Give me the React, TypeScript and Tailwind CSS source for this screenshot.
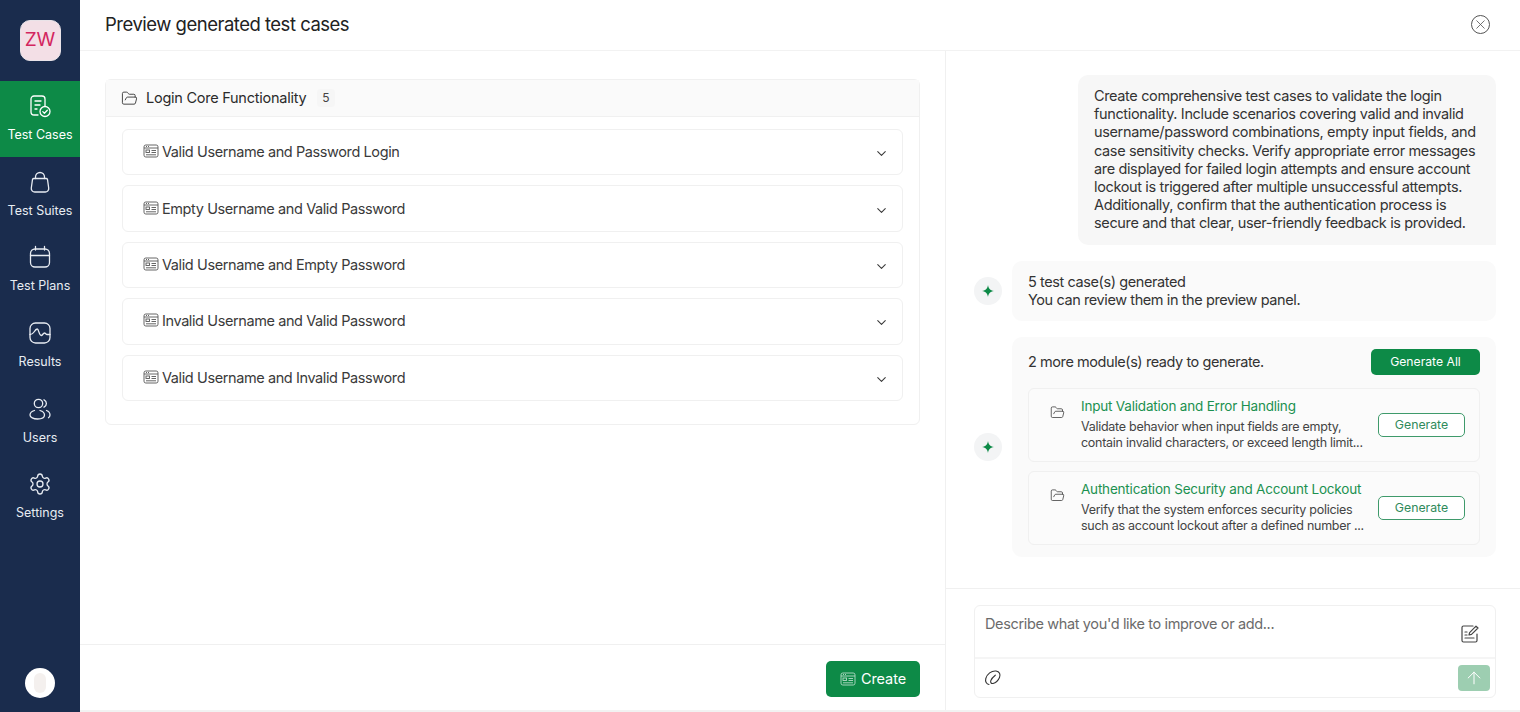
import { ArrowUp, ChevronDown, FolderOpen, Settings, X } from "lucide-react";

const NAV_ITEMS = [
  { label: "Test Cases", icon: CasesIcon, active: true },
  { label: "Test Suites", icon: BagIcon },
  { label: "Test Plans", icon: CalendarIcon },
  { label: "Results", icon: PulseIcon },
  { label: "Users", icon: UsersIcon },
  { label: "Settings", icon: GearIcon },
];

const TEST_CASES = [
  "Valid Username and Password Login",
  "Empty Username and Valid Password",
  "Valid Username and Empty Password",
  "Invalid Username and Valid Password",
  "Valid Username and Invalid Password",
];

const PROMPT_LINES = [
  "Create comprehensive test cases to validate the login",
  "functionality. Include scenarios covering valid and invalid",
  "username/password combinations, empty input fields, and",
  "case sensitivity checks. Verify appropriate error messages",
  "are displayed for failed login attempts and ensure account",
  "lockout is triggered after multiple unsuccessful attempts.",
  "Additionally, confirm that the authentication process is",
  "secure and that clear, user-friendly feedback is provided.",
];

const MODULES = [
  {
    title: "Input Validation and Error Handling",
    lines: [
      "Validate behavior when input fields are empty,",
      "contain invalid characters, or exceed length limit...",
    ],
  },
  {
    title: "Authentication Security and Account Lockout",
    lines: [
      "Verify that the system enforces security policies",
      "such as account lockout after a defined number ...",
    ],
  },
];

function CasesIcon() {
  return (
    <svg width="24" height="24" viewBox="0 0 24 24" fill="none" stroke="currentColor" strokeWidth="1.3" strokeLinecap="round" strokeLinejoin="round">
      <path d="M10 21H6a3 3 0 0 1-3-3V5a3 3 0 0 1 3-3h8a3 3 0 0 1 3 3v7" />
      <path d="M7 7h6M7 11h5M7 15h2" />
      <circle cx="17" cy="17.5" r="5" />
      <path d="m14.8 17.6 1.6 1.6 2.9-3" />
    </svg>
  );
}

function BagIcon() {
  return (
    <svg width="24" height="24" viewBox="0 0 24 24" fill="none" stroke="currentColor" strokeWidth="1.3" strokeLinecap="round" strokeLinejoin="round">
      <path d="M7.5 8.5V7a4.5 4.5 0 0 1 9 0v1.5" />
      <path d="M5.8 8.5h12.4c.6 0 1.1.4 1.3 1l1.2 8.5a3.5 3.5 0 0 1-3.5 4H6.8a3.5 3.5 0 0 1-3.5-4l1.2-8.5c.2-.6.7-1 1.3-1Z" />
    </svg>
  );
}

function CalendarIcon() {
  return (
    <svg width="24" height="24" viewBox="0 0 24 24" fill="none" stroke="currentColor" strokeWidth="1.3" strokeLinecap="round" strokeLinejoin="round">
      <rect x="2.5" y="4" width="19" height="18" rx="4.5" />
      <path d="M2.5 10.5h19M7.5 1.500V5M16.5 1.500V5" />
    </svg>
  );
}

function PulseIcon() {
  return (
    <svg width="24" height="24" viewBox="0 0 24 24" fill="none" stroke="currentColor" strokeWidth="1.3" strokeLinecap="round" strokeLinejoin="round">
      <rect x="2" y="2" width="20" height="20" rx="5.5" />
      <path d="M2 13.500c2 0 3-1 4-2.500s2-3 3.200-3c1.600 0 1.800 6.500 4 6.500 1.500 0 1.800-2.500 3.300-2.500 1 0 1.500 1.500 2.500 1.500H22" />
    </svg>
  );
}

function UsersIcon() {
  return (
    <svg width="24" height="24" viewBox="0 0 24 24" fill="none" stroke="currentColor" strokeWidth="1.3" strokeLinecap="round" strokeLinejoin="round">
      <circle cx="10.500" cy="6.500" r="4.200" />
      <path d="M6.500 13.500C3.800 14.300 2 16 2 18c0 2.400 3.500 4 7.500 4 3.800 0 7-1.500 7-4 0-2-1.800-3.700-4.500-4.500" />
      <path d="M16 2.800c1.500.7 2.400 2.100 2.400 3.700S17.500 9.500 16 10.200" />
      <path d="M18.500 13.500c2.200.8 3.500 2.500 3.500 4.500 0 1.100-.5 2-1.500 2.700" />
    </svg>
  );
}

function GearIcon() {
  return <Settings size={24} strokeWidth={1.3} />;
}

function CardIcon({ className }: { className?: string }) {
  return (
    <svg width="16" height="16" viewBox="0 0 16 16" fill="none" stroke="currentColor" strokeWidth="0.9" className={className}>
      <rect x="1" y="2" width="14" height="12" rx="1.800" />
      <path d="M1 5h14M3 3.500h1M5 3.500h1" />
      <rect x="3" y="7" width="3.500" height="2.500" />
      <path d="M8.500 7.500H13M8.500 9.500H13M3 11.800h10" />
    </svg>
  );
}

function SparkBadge() {
  return (
    <div className="flex h-[28px] w-[28px] shrink-0 items-center justify-center rounded-full bg-[#f3f4f5]">
      <svg width="12" height="12" viewBox="0 0 12 12" fill="#0d8a47">
        <path d="M6 0c.5 3.400 2 5.300 6 6-4 .7-5.500 2.600-6 6-.5-3.400-2-5.300-6-6 4-.7 5.500-2.600 6-6Z" />
      </svg>
    </div>
  );
}

function Sidebar() {
  return (
    <aside className="flex w-[80px] shrink-0 flex-col bg-[#1a2c4d] text-[#e8ecf2]">
      <div className="flex h-[81px] items-center justify-center">
        <div className="flex h-[41px] w-[41px] items-center justify-center rounded-[10px] border border-[#e9e3e8] bg-[#f3dfe6] text-[19px] font-normal text-[#d3265f]">
          ZW
        </div>
      </div>
      {NAV_ITEMS.map((item) => (
        <div
          key={item.label}
          className={`flex h-[75.700px] flex-col items-center pt-[13px] ${item.active ? "bg-[#0d8a47] text-white" : ""}`}
        >
          <item.icon />
          <span className="mt-[8px] text-[12.500px] leading-[18px]">{item.label}</span>
        </div>
      ))}
      <div className="mt-auto flex justify-center pb-[14px]">
        <div className="flex h-[30px] w-[30px] items-center justify-center rounded-full bg-white">
          <div className="h-[20px] w-[12px] rounded-full bg-[#f4f0ee]" />
        </div>
      </div>
    </aside>
  );
}

function LeftPanel() {
  return (
    <section className="flex w-[866px] shrink-0 flex-col border-r border-[#f0f0f0]">
      <div className="flex-1 pl-[25px] pr-[25px] pt-[28px]">
        <div className="w-[815px] rounded-[6px] border border-[#f0f0f0]">
          <div className="flex h-[37px] items-center gap-[8px] border-b border-[#f0f0f0] bg-[#fafafa] px-[15px] text-[#2b2b2b]">
            <FolderOpen size={17} strokeWidth={1.200} />
            <span className="text-[14.500px] tracking-[-0.25px]">Login Core Functionality</span>
            <span className="ml-[3px] rounded-[4px] bg-[#f6f6f6] px-[5px] text-[12px] text-[#444]">5</span>
          </div>
          <div className="flex flex-col gap-[10px] px-[16px] pb-[23px] pt-[12px]">
            {TEST_CASES.map((name) => (
              <div
                key={name}
                className="flex h-[46.400px] items-center rounded-[6px] border border-[#f0f0f0] pl-[20px] pr-[14px] text-[#3a3a3a]"
              >
                <CardIcon className="-mt-[2px] mr-[3px] text-[#555]" />
                <span className="text-[14.500px] tracking-[-0.4px]">{name}</span>
                <ChevronDown size={15} strokeWidth={1.700} className="ml-auto mt-[3px] -mr-[1px]" />
              </div>
            ))}
          </div>
        </div>
      </div>
      <div className="flex h-[66px] items-start justify-end border-t border-[#f0f0f0] pr-[25px] pt-[16px]">
        <button type="button" className="flex h-[36px] w-[94px] items-center justify-center gap-[5px] rounded-[5px] bg-[#0d8a47] text-[14.500px] tracking-[-0.1px] text-white">
          <CardIcon className="opacity-70" />
          Create
        </button>
      </div>
    </section>
  );
}

function ChatPanel() {
  return (
    <section className="flex min-w-0 flex-1 flex-col">
      <div className="flex-1 pl-[28px] pr-[24px] pt-[24px] text-[#333]">
        <div className="ml-auto w-[418px] rounded-l-[10px] rounded-tr-[10px] bg-[#f7f7f7] px-[16px] py-[12px] text-[14.500px] leading-[18.200px] tracking-[-0.36px]">
          {PROMPT_LINES.map((line) => (
            <div key={line} className="whitespace-nowrap">{line}</div>
          ))}
        </div>

        <div className="mt-[16px] flex items-center gap-[10px]">
          <SparkBadge />
          <div className="flex-1 rounded-[10px] bg-[#fafafa] px-[16px] py-[12px] text-[14.500px] leading-[18px] tracking-[-0.41px]">
            <div>5 test case(s) generated</div>
            <div>You can review them in the preview panel.</div>
          </div>
        </div>

        <div className="mt-[16px] flex items-center gap-[10px]">
          <SparkBadge />
          <div className="flex-1 rounded-[10px] bg-[#fafafa] px-[16px] py-[12px]">
            <div className="flex items-center justify-between">
              <span className="text-[14.500px] tracking-[-0.43px]">2 more module(s) ready to generate.</span>
              <button type="button" className="h-[26px] w-[109px] rounded-[5px] bg-[#0d8a47] pt-px text-[12.200px] text-white">
                Generate All
              </button>
            </div>
            <div className="mt-[13px] flex flex-col gap-[9px]">
              {MODULES.map((module) => (
                <div key={module.title} className="flex h-[74px] items-center rounded-[6px] border border-[#f0f0f0] bg-[#fbfbfb] pl-[21px] pr-[14px]">
                  <FolderOpen size={15} strokeWidth={1.200} className="mb-[25px] shrink-0" />
                  <div className="-mt-[1px] ml-[16px] min-w-0 flex-1">
                    <div className="text-[13.500px] leading-[18px] tracking-[-0.2px] text-[#1b9150]">{module.title}</div>
                    <div className="mt-[4px] text-[12.500px] leading-[16.500px] tracking-[-0.27px] text-[#444]">
                      {module.lines.map((line) => (
                        <div key={line} className="whitespace-nowrap">{line}</div>
                      ))}
                    </div>
                  </div>
                  <button type="button" className="mt-[1px] h-[24px] w-[87px] shrink-0 rounded-[5px] border border-[#3f9a6b] bg-white text-[12.300px] text-[#2f8a5b]">
                    Generate
                  </button>
                </div>
              ))}
            </div>
          </div>
        </div>
      </div>

      <div className="h-[122px] border-t border-[#f0f0f0] pl-[28px] pr-[24px] pt-[16px]">
        <div className="h-[93px] rounded-[6px] border border-[#f0f0f0]">
          <div className="relative h-[53px] border-b-2 border-[#f5f5f5] px-[10px] pt-[8px] text-[14.500px] leading-[20px] tracking-[-0.36px] text-[#6b6b6b]">
            Describe what you'd like to improve or add...
            <svg width="20" height="20" viewBox="0 0 20 20" fill="none" stroke="#444" strokeWidth="1.200" strokeLinecap="round" strokeLinejoin="round" className="absolute right-[15px] top-[18px]">
              <path d="M13 2H3.500A1.500 1.500 0 0 0 2 3.500v13A1.500 1.500 0 0 0 3.500 18h12a1.500 1.500 0 0 0 1.500-1.500V10" />
              <path d="m9 11 .6-2.400L16 2.200l2 1.800-6.500 6.400L9 11Z" />
              <path d="M5 8h2M5 11h2M5 14h9" />
            </svg>
          </div>
          <div className="flex h-[38px] items-center justify-between pl-[9px] pr-[5px]">
            <svg width="18" height="18" viewBox="0 0 18 18" fill="none" stroke="#333" strokeWidth="1.100" strokeLinecap="round">
              <path d="M5 15.500C2.500 15 1 12.500 1.800 9.500 3 5 7.500 1.500 12 2c3.500.4 4.800 3.500 3.500 6.500-1.200 2.800-4 5.500-6.500 6-1.800.3-2.800-1-2.200-2.800.7-2 2.500-4 4.500-5.500" />
            </svg>
            <button type="button" className="flex h-[26px] w-[32px] items-center justify-center rounded-[4px] bg-[#9dceb1] text-white">
              <ArrowUp size={20} strokeWidth={1.200} />
            </button>
          </div>
        </div>
      </div>
    </section>
  );
}

export default function App() {
  return (
    <div className="flex h-[712px] w-[1520px] overflow-hidden bg-white font-['Inter',sans-serif]">
      <Sidebar />
      <main className="flex min-w-0 flex-1 flex-col border-b-2 border-[#f2f2f2]">
        <header className="flex h-[51px] shrink-0 items-center justify-between border-b border-[#f2f2f2] pl-[25px] pr-[30px]">
          <h1 className="text-[18.500px] font-normal tracking-[-0.5px] text-[#222]">Preview generated test cases</h1>
          <div className="-mt-[1px] flex h-[19px] w-[19px] items-center justify-center rounded-full border border-[#555] text-[#555]">
            <X size={15} strokeWidth={1.300} />
          </div>
        </header>
        <div className="flex min-h-0 flex-1">
          <LeftPanel />
          <ChatPanel />
        </div>
      </main>
    </div>
  );
}
